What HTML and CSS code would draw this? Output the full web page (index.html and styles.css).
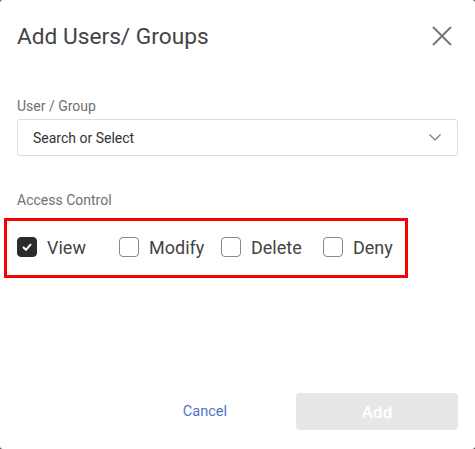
FILE: index.html
```html
<!DOCTYPE html>
<html>
<head>
<meta charset="utf-8">
<link rel="stylesheet" href="styles.css">
</head>
<body>
<div class="dialog">
  <div class="header">
    <h1 class="title">Add Users/ Groups</h1>
    <button class="close" aria-label="Close">
      <svg width="20" height="20" viewBox="0 0 20 20"><path d="M1 1L19 19M19 1L1 19" stroke="#777" stroke-width="2" fill="none"/></svg>
    </button>
  </div>
  <div class="field">
    <div class="label">User / Group</div>
    <div class="select">
      <span class="placeholder">Search or Select</span>
      <svg class="chev" width="12" height="7" viewBox="0 0 12 7"><path d="M0.5 0.5L6 6L11.5 0.5" stroke="#777" stroke-width="1.2" fill="none"/></svg>
    </div>
  </div>
  <div class="field access">
    <div class="label">Access Control</div>
    <div class="checks">
      <label class="check"><span class="box checked"><svg width="10" height="8" viewBox="0 0 10 8"><path d="M1 4L4 6.8L9 1.2" stroke="#fff" stroke-width="2" fill="none"/></svg></span>View</label>
      <label class="check"><span class="box"></span>Modify</label>
      <label class="check"><span class="box"></span>Delete</label>
      <label class="check"><span class="box"></span>Deny</label>
    </div>
  </div>
  <div class="footer">
    <button class="cancel">Cancel</button>
    <button class="add">Add</button>
  </div>
</div>
</body>
</html>
```

FILE: styles.css
```css
* { box-sizing: border-box; }
html, body { margin: 0; padding: 0; }
body {
  width: 475px;
  height: 449px;
  background: #555;
  font-family: Roboto, "Liberation Sans", sans-serif;
}
.dialog {
  width: 475px;
  height: 449px;
  background: #fff;
  border-radius: 3px;
  padding: 0 17px 0 17px;
  display: flex;
  flex-direction: column;
}
.header {
  display: flex;
  justify-content: space-between;
  align-items: center;
  height: 72px;
}
.title {
  margin: 0;
  font-size: 22.7px;
  font-weight: 400;
  color: #444;
}
.close {
  border: 0;
  background: none;
  padding: 0;
  margin-right: 6px;
  width: 20px;
  height: 20px;
  display: flex;
}
.field { margin-top: 26px; }
.label {
  font-size: 14px;
  color: #707070;
  line-height: 16px;
}
.select {
  margin-top: 5px;
  height: 37px;
  border: 1px solid #dcdcdc;
  border-radius: 3px;
  display: flex;
  align-items: center;
  justify-content: space-between;
  padding: 0 16px 0 15px;
}
.placeholder { font-size: 14px; color: #333; }
.access { margin-top: 36px; }
.checks {
  margin: 10px 0 0 -13px;
  width: 404px;
  height: 60px;
  border: 3px solid #f00;
  display: grid;
  grid-template-columns: repeat(4, 102px);
  align-items: center;
  padding-left: 10px;
  padding-bottom: 2px;
}
.check {
  display: flex;
  align-items: center;
  font-size: 18px;
  color: #444;
}
.box {
  width: 20px;
  height: 20px;
  border: 1px solid #888;
  border-radius: 4px;
  margin-right: 10px;
  display: flex;
  align-items: center;
  justify-content: center;
}
.box.checked { background: #2b2b2b; border-color: #2b2b2b; }
.footer {
  margin-top: auto;
  margin-bottom: 19px;
  display: flex;
  justify-content: flex-end;
  align-items: center;
}
.cancel {
  border: 0;
  background: none;
  font-family: inherit;
  font-size: 14.5px;
  color: #4a74c9;
  padding: 0;
  margin-right: 69px;
}
.add {
  width: 162px;
  height: 37px;
  border: 0;
  border-radius: 4px;
  background: #e6e7e9;
  color: #fff;
  font-family: inherit;
  font-size: 17px;
  font-weight: 500;
}
```
